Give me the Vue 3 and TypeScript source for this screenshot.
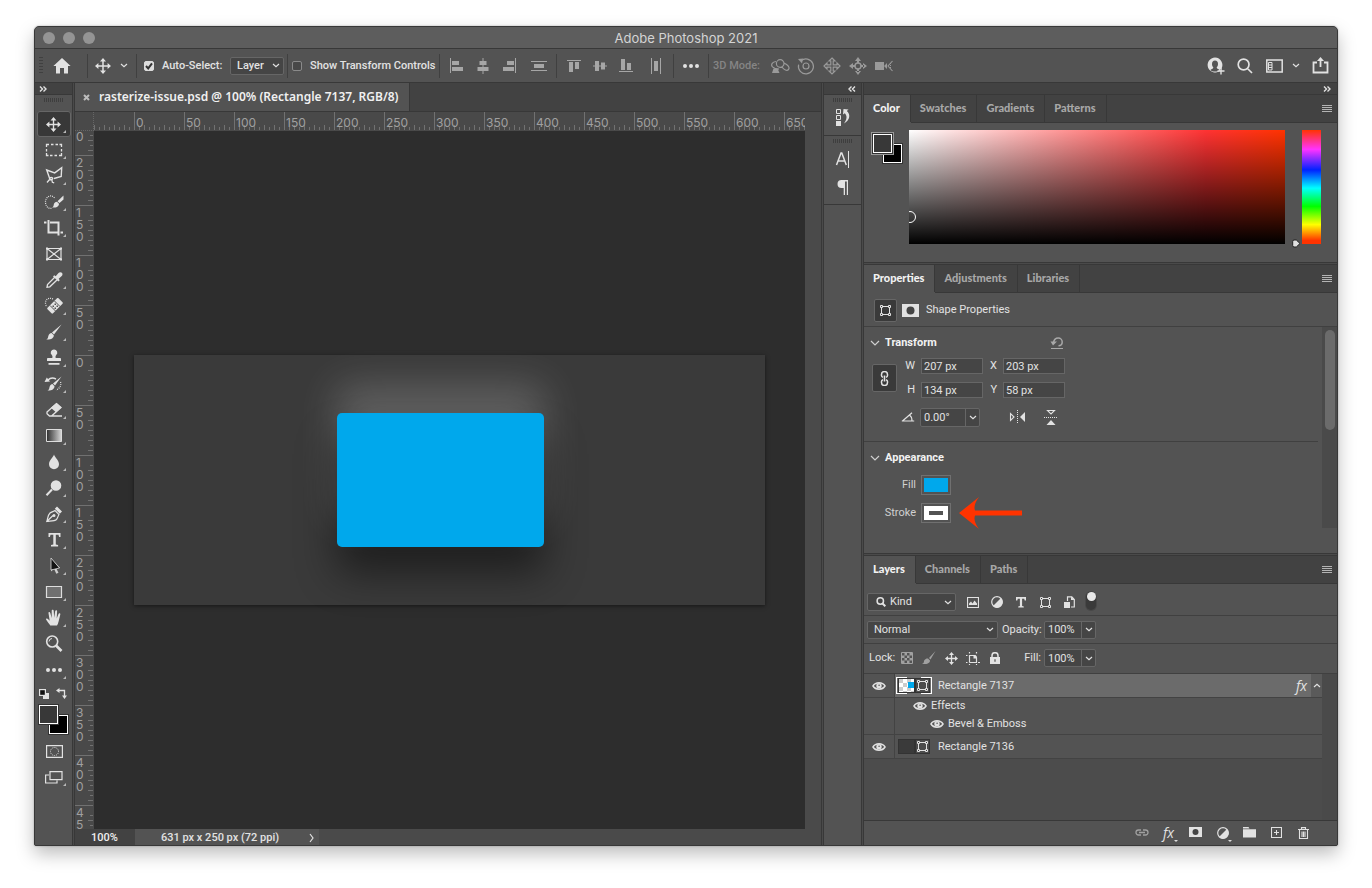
<script setup lang="ts">
import { h, ref } from 'vue'

type Attrs = Record<string, string | number>
type Shape = { d: string; a: Attrs }
type Icon = { w: number; h: number; shapes: Shape[] }

const f = (d: string, extra: Attrs = {}): Shape => ({ d, a: { fill: 'currentColor', ...extra } })
const s = (d: string, width = 1, extra: Attrs = {}): Shape => ({
  d,
  a: { fill: 'none', stroke: 'currentColor', 'stroke-width': width, ...extra },
})
const icon = (w: number, hgt: number, ...shapes: Shape[]): Icon => ({ w, h: hgt, shapes })
const dots = { 'stroke-dasharray': '1 1' }

const icons: Record<string, Icon> = {
  home: icon(18, 16, f('M9 0l8.6 8H15v7.5h-4V10H7v5.5H3V8H.4z')),
  move: icon(16, 16, f('M8 0l3 3.4H5zM8 16l3-3.4H5zM0 8l3.4-3v6zM16 8l-3.4-3v6z'), s('M8 2v12M2 8h12', 1.5)),
  moveSmall: icon(13, 13, f('M6.5 0L9 3H4zM6.5 13L9 10H4zM0 6.5L3 4v5zM13 6.5L10 4v5z'), s('M6.5 2v9M2 6.5h9', 1.3)),
  chevron: icon(8, 5, s('M1 1l3 2.6L7 1', 1.2)),
  chevronUp: icon(8, 5, s('M1 4l3-2.6L7 4', 1.2)),
  chevronRight: icon(6, 10, s('M1 1l3 4-3 4', 1.2)),
  caret: icon(10, 6, s('M1 1l4 4 4-4', 1.2)),
  check: icon(8, 8, s('M1 4l2.2 2.4L7 1.4', 2)),
  alignLeft: icon(16, 16, s('M1.5 0v15'), f('M3 3h7v4H3zM3 9h11v4H3z')),
  alignCenter: icon(16, 16, s('M8 0v16'), f('M4.5 3h7v4h-7zM2.5 9h11v4h-11z')),
  alignRight: icon(16, 16, s('M14.5 0v15'), f('M6 3h7v4H6zM2 9h11v4H2z')),
  spreadV: icon(16, 16, s('M0 3.5h16M0 12.5h16'), f('M3 6h10v4H3z')),
  alignTop: icon(16, 16, s('M1 2.5h14'), f('M3 4h4v10H3zM9 4h4v7H9z')),
  alignMiddle: icon(16, 16, s('M1 8h14'), f('M3 3h4v10H3zM9 4.5h4v7H9z')),
  alignBottom: icon(16, 16, s('M1 13.5h14'), f('M3 1h4v11H3zM9 5h4v7H9z')),
  spreadH: icon(16, 16, s('M3.5 0v16M12.5 0v16'), f('M6 3h4v10H6z')),
  dotsIcon: icon(16, 4, f('M0 2a2 2 0 104 0 2 2 0 10-4 0zM6 2a2 2 0 104 0 2 2 0 10-4 0zM12 2a2 2 0 104 0 2 2 0 10-4 0z')),
  orbit: icon(20, 16, s('M14 5.5a3.8 3.8 0 10-7.6 0 3.8 3.8 0 007.6 0M6 3.5C2.5 3.8.5 6.500 2.5 8.8c1.5 1.600 4 2.200 6.500 2.400M14 5c4 1.800 6 4.500 4.500 6.500-1.500 1.800-4.500.5-6.500-2.500', 1.2), f('M3.5 10.500h4l2 4.500H2z')),
  roll: icon(18, 18, s('M12 9a3 3 0 10-6 0 3 3 0 006 0M4 3.7a7.5 7.5 0 11-2.4 4', 1.2), f('M1 2l5-.5-1 5z')),
  pan: icon(18, 18, s('M9 1l3 3h-1.8v3.8H14V6l3 3-3 3v-1.8h-3.8V14H12l-3 3-3-3h1.8v-3.8H4V12L1 9l3-3v1.8h3.8V4H6z', 1.2)),
  slide: icon(18, 18, s('M12 9a3 3 0 10-6 0 3 3 0 006 0', 1.4), f('M9 0l3 4H6zM9 18l3-4H6zM0 9l4-3v6zM18 9l-4-3v6zM8 3h2v3H8zM8 12h2v3H8zM3 8h3v2H3zM12 8h3v2h-3z')),
  camera: icon(18, 12, f('M0 2h9v8H0zM9 6l3-3v6z'), s('M17.5 1L13 6l4.5 5', 1.1), s('M15.5 3v6', 1, dots)),
  user: icon(18, 18, f('M8 .5a7.5 7.5 0 105 13.2V12h1.2A7.5 7.5 0 008 .5z'), f('M8 3.5c-2 0-3 1.5-3 3.5 0 1.500.5 2.700 1.400 3.500-.4 1.500-1.900 1.400-2.900 2.500C5 15 11 15 12.500 13c-1-1.100-2.500-1-2.900-2.500C10.500 9.700 11 8.500 11 7c0-2-1-3.500-3-3.500z', { fill: '#535353' }), s('M14 10.5v7M10.5 14h7', 1.4)),
  search: icon(16, 16, s('M12 6.5a5.4 5.4 0 10-10.8 0 5.4 5.4 0 0010.8 0M10.5 10.5L15 15', 1.7)),
  lens: icon(10, 10, s('M7.5 4a3.2 3.2 0 10-6.4 0 3.2 3.2 0 006.4 0', 1.5), s('M6.5 6.5L9.3 9.3', 2)),
  workspace: icon(17, 14, s('M.8 1h15.4v12H.8z', 1.5), s('M2.5 3.5H6V11H2.5zM2.5 6H6M2.5 8.5H6', 1)),
  share: icon(17, 17, s('M5 5.5H1.5v10h14v-10H12M8.5 10V2', 1.8), f('M8.5 0l3.5 4H5z')),
  close: icon(7, 7, s('M1 1l5 5M6 1L1 6', 2)),
  dblRight: icon(8, 6, s('M1 .5L3.5 3 1 5.5M4.5 .5L7 3 4.5 5.5', 1.4)),
  dblLeft: icon(8, 6, s('M3.5 .5L1 3l2.5 2.5M7 .5L4.5 3 7 5.5', 1.4)),
  menu: icon(10, 8, s('M0 .5h10M0 2.5h10M0 4.5h10M0 6.5h10')),
  history: icon(16, 18, s('M1.5 1.5h4v4h-4zM1.5 7.5h4v4h-4z'), f('M1 13h5v5H1zM8 6.5L8.500 1l5 .5-1.700 1.500c3.700 3 3.700 9-2.800 12.500 3-4 3.400-7.500.8-10.200z')),
  charA: icon(16, 18, s('M1.5 15L6 3h.8l4.5 12M3 11h7', 1.5), s('M13.5 1v17')),
  paragraph: icon(14, 16, f('M5.500 1h6.500v15h-1.200V2.500H9V16H7.700V9H5.500a4 4 0 010-8z')),
  shape: icon(13, 13, s('M2.5 2.5h8v8h-8z'), s('M1.5 1.5h2v2h-2zM9.5 1.5h2v2h-2zM1.5 9.5h2v2h-2zM9.5 9.5h2v2h-2z', 1, { fill: '#3a3a3a' })),
  mask: icon(17, 13, f('M0 0h17v13H0z'), f('M4.5 6.5a4 4 0 108 0 4 4 0 10-8 0z', { fill: '#454545' })),
  maskSmall: icon(13, 11, f('M0 0h13v10H0z'), f('M3.5 5a3 3 0 106 0 3 3 0 10-6 0z', { fill: '#454545' })),
  reset: icon(14, 13, s('M3.500 5.5C4 3 6 1 8.2 1c2.300 0 4 1.800 4 4 0 2-1.200 3.700-3.700 3.700', 1.5, { stroke: '#a8a8a8' }), f('M.5 4.500h6.500L3 8.500z', { fill: '#a8a8a8' }), s('M1 11.5h12', 1, { stroke: '#a8a8a8' })),
  link: icon(9, 15, s('M3 6.3C2 6 1.5 5.3 1.5 4.5v-1a3 3 0 016 0v1c0 .8-.5 1.5-1.5 1.8M3 8.700c-1 .3-1.5 1-1.5 1.8v1a3 3 0 006 0v-1c0-.8-.5-1.5-1.5-1.8', 1.5), s('M4.5 4.5v6', 1.6)),
  angle: icon(14, 10, s('M.8 9h12.4M1.5 9L11 .8M8.5 3c2 1.4 2.5 3.500 2.5 6', 1.2)),
  flipH: icon(17, 14, s('M1.5 3.5v7L5 7z', 1.1), s('M8.5 0v14', 1, dots), f('M16 2v10l-5-5z')),
  flipV: icon(14, 17, s('M3.5 1.5h7L7 5z', 1.1), s('M0 8.5h14', 1, dots), f('M2.5 16L7 11l4.5 5z')),
  eye: icon(14, 10, s('M1 5C3.5.8 10.5.8 13 5 10.5 9.2 3.5 9.2 1 5z', 1.5), f('M4.300 4.800a2.700 2.700 0 105.400 0 2.700 2.700 0 10-5.400 0z'), f('M6.300 4.300a.8.8 0 101.600 0 .8.8 0 10-1.600 0z', { fill: '#555' })),
  picture: icon(12, 11, s('M.5.5h11v10H.5z', 1.2), f('M2 8V6.5l2-2 1.5 2 2-3L10 6.5V8z')),
  adjust: icon(12, 12, s('M11.3 6A5.3 5.3 0 10.7 6a5.3 5.3 0 0010.6 0', 1.2), f('M10 2L2 10A5.4 5.4 0 0010 2z')),
  typeT: icon(12, 12, f('M1 1h10v3.5H9.7L9.2 2.7H7.1v7.4l1.7.3V11.5H3.2V10.4l1.7-.3V2.7H2.8L2.3 4.5H1z')),
  smart: icon(11, 13, f('M0 6h6v6H0z'), s('M3.5 5V.8h4.3L10.3 3.5V11H7', 1.2), f('M7 .5V4h3.5z')),
  grid: icon(12, 12, s('M.5.5h11v11H.5z'), f('M3.5 1h2.500v2.500H3.500zM8.500 1H11v2.500H8.500zM1 3.500h2.500V6H1zM6 3.500h2.500V6H6zM3.500 6H6v2.500H3.500zM8.500 6H11v2.500H8.500zM1 8.500h2.500V11H1zM6 8.500h2.500V11H6z')),
  brushSmall: icon(14, 14, f('M13.5 0L7 7l1.5 1.5zM6 7.5l2 2c0 3-4 4-8 3.5 2.5-1 1.5-2.5 2.5-4C3.4 7.7 4.8 7.2 6 7.5z')),
  artboard: icon(14, 13, s('M3.5 0v1.5M3.5 3v7.5M0 3.5h1.5M3.5 3.5H8L10.5 6v4.5h-7M12 10.5h2M0 10.5h1.5M3.5 12v1M10.5 12v1M10.5 0v1.5', 1.2), f('M7.5 3h2L11 4.5v2H7.5z')),
  lock: icon(10, 12, f('M0 5h10v7H0z'), s('M2 5.5V3.7a3 3 0 016 0V5.5', 1.5), f('M4.4 7.2h1.2v2.5H4.4z', { fill: '#535353' })),
  chain: icon(14, 7, s('M6 1H3.5a2.5 2.5 0 000 5H6M8 1h2.5a2.5 2.5 0 010 5H8M4 3.5h6', 1.3)),
  folder: icon(13, 11, f('M0 0h5.5l1 1.5H0zM0 2.3h13V10.5H0z')),
  plus: icon(11, 11, s('M.5.5h10v10H.5zM5.5 3v5M3 5.5h5', 1.1)),
  trash: icon(11, 12, s('M0 2.5h11M3.5 2V.6h4V2M1.5 3v8.5h8V3M4 4.5v5.5M5.5 4.5v5.5M7 4.5v5.5', 1.1)),
  defaults: icon(10, 10, f('M4 4h6v6H4z'), f('M0 0h7v7H0z'), f('M1.2 1.2h4.600v4.600H1.200z', { fill: '#111' })),
  swap: icon(11, 11, s('M3 2.5h5.5V8', 1.3), f('M0 2.5L3.5 0v5zM8.5 11L6 7.5h5z')),
  quickMask: icon(17, 13, s('M.6.6h15.8v11.8H.6z', 1.2), s('M12.5 6.5a4 4 0 10-8 0 4 4 0 008 0', 1, dots)),
  screens: icon(18, 13, s('M5 .6h12v8H5zM4 4H.6v8H12V9.5', 1.2)),
  huePointer: icon(9, 9, f('M1.5 1h2.8L8 4.5 4.3 8H1.5L.7 6.500v-4z', { fill: '#e0e0e0', stroke: '#222' })),

  tMove: icon(24, 24, f('M11.5 5l3 3.4h-6zM11.5 20l3-3.4h-6zM4 12.5l3.4-3v6zM19 12.5l-3.4-3v6z'), s('M11.5 7v11M6 12.5h11', 1.4)),
  tMarquee: icon(24, 24, s('M4.5 9V6.5H7M9 6.5h2.5M13.5 6.5H16M17.5 6.5h2V9M19.5 11v2.5M19.5 15v2.5H17M15 17.5h-2.5M10.5 17.5H8M6.5 17.5h-2V15M4.5 13.5V11', 1.3)),
  tLasso: icon(24, 24, s('M7.5 14L4.7 6l8 2.9 7-5.2-.5 8.8L12 14.5', 1.4), s('M10.8 14.6c0-1.5-3.3-1.5-3.3 0s3.3 1.5 3.3 0M7.8 15.3L5 18.5M9.800 15.500l.6 2.800 1.800.5', 1.3)),
  tQuick: icon(24, 24, s('M12.5 8C9 3.5 3 7 3.5 12.5S8 19 10 18', 1.2, dots), f('M21.5 5.500v4l-4 3.500-2-1.800zM15 11.700l2 2c0 3.500-4 4.200-7 3.800 2-1.200 1.500-2.300 2-3.800.5-1.300 1.800-2 3-2z')),
  tCrop: icon(24, 24, s('M2 6.5h2.5M6.5 4v12.5H16M8 6.5h8.5v13M18.5 16.5h2.5', 2)),
  tFrame: icon(24, 24, s('M5 6.5h14v11H5zM5 6.5l14 11M19 6.5l-14 11', 1.2), f('M4 5.5h2v2H4zM18 5.5h2v2h-2zM4 16.5h2v2H4zM18 16.5h2v2h-2z')),
  tDropper: icon(24, 24, s('M13 9l-7.5 7.5-.5 2.8 2.8-.5L15.5 11.5', 1.3), f('M11 8.5l1.2-1.2 1.5 1L16.5 5c1-1.2 2.6-1 3.4-.2s.9 2.2-.2 3.2l-3 2.7 1 1.5-1.2 1.2z')),
  tHeal: icon(24, 24, s('M11 5C7 3 3 5.5 3.5 9.5 3.6 11 4.3 12 5 12.5', 1.2, dots), f('M16.5 4.3l4 4c.5.5.5 1 0 1.5l-9.5 9.5c-.5.5-1 .5-1.500 0l-4-4c-.5-.5-.5-1 0-1.500l9.500-9.500c.5-.5 1-.5 1.500 0z'), s('M12.5 7l5.5 5.5M8 11.5l5.5 5.5', 1, { stroke: '#535353' }), f('M12.5 9.5H14V11h-1.5zM10.5 11.5H12V13h-1.5zM12.5 13.5H14V15h-1.5zM14.5 11.5H16V13h-1.5z', { fill: '#535353' })),
  tBrush: icon(24, 24, f('M19.5 4.5L12 14.5 10 12.5zM9.5 13l2.3 2.3c.2 3-3.5 4.7-7.5 4.2 2-.7 1.5-2.2 2.2-4C7 14 8.2 13 9.5 13z')),
  tStamp: icon(24, 24, f('M12 3.5a3.2 3.2 0 012.2 5.6c-.8.9-.8 1.8-.5 2.9H18c.6 0 1 .5 1 1v2H5v-2c0-.5.4-1 1-1h4.3c.3-1.1.3-2-.5-2.9A3.2 3.2 0 0112 3.5zM6.5 17h11v1.7h-11z')),
  tHistory: icon(24, 24, f('M19.5 4.5L13 13.5l-2-2zM10.5 12l2 2.2c0 3-3.3 4.7-7 4.3 2-.7 1.5-2.2 2.2-4 .5-1.5 1.6-2.5 2.8-2.5zM2.5 10l2.3-4.5L8 9.5z'), s('M6 8c2-2 5-2.5 8-1', 1.5), s('M18.5 10c1 3-.5 6.5-4.5 8', 1.2, dots)),
  tEraser: icon(24, 24, s('M5 14l9.5-8.5 4.5 4L9.5 18H7.5L5 15.7zM10 18h10', 1.3), f('M14.5 5l5 4.5-5.5 4.7-5.2-4.5z')),
  tGradient: icon(24, 24, f('M4.5 5.5h15v12h-15z', { fill: 'url(#toolGradient)', stroke: '#ddd' })),
  tDrop: icon(24, 24, f('M12 4.5c1 3 5 6 5 9.7a5 5 0 01-10 0C7 10.5 11 7.5 12 4.5z')),
  tDodge: icon(24, 24, f('M19.3 9.5a5.3 5.3 0 10-10.6 0 5.3 5.3 0 0010.6 0z'), s('M10 13.5l-5.5 5.8', 2)),
  tPen: icon(24, 24, s('M4.8 19.5c1-3 1-6.5 3.2-8.5 1.5-1.2 3.5-1.5 5-2.5l4 4c-1 1.5-1.2 3.5-2.5 5-2 1.7-6 1.5-9.7 2zM5 19.3l6-5.8', 1.2), f('M10.5 13.5a1.5 1.5 0 103 0 1.5 1.5 0 10-3 0zM15 4.5l5 5-2.2 2.3-5-5z')),
  tType: icon(24, 24, f('M6.5 5h12v4h-1.4l-.6-2.2h-2.7v9.8l2.3.4V18.5H9V17l2.3-.4V6.8H8.5L7.9 9H6.5z')),
  tSelect: icon(24, 24, f('M9 4.5v13l3-2.8 2.3 5 2.2-1-2.4-4.8h4z', { fill: '#ccc' }), f('M9 4v12l8.5-2z', { fill: '#141414', stroke: '#ddd', 'stroke-width': 0.8 })),
  tRect: icon(24, 24, f('M4.5 6.5h15v11h-15z', { fill: '#707070', stroke: '#ddd', 'stroke-width': 1.2 })),
  tHand: icon(24, 24, f('M8.3 19.5C7 17.5 5.5 16 4.2 13.8c-.7-1.3 1-1.8 2-.6l1.5 1.5L6.5 7.2c-.2-1.4 1.5-1.5 1.8-.2l1.4 5V4.8c0-1.3 1.9-1.3 2 0l.5 7 1-6.7c.3-1.2 2-1 1.9.3l-.4 7.2 1.9-4.8c.5-1.1 2-.6 1.7.6l-1.7 7c-.5 2-1 3-1.6 4.1z')),
  tZoom: icon(24, 24, s('M15.7 9.5a5.5 5.5 0 10-11 0 5.5 5.5 0 0011 0', 1.6), s('M7 9.5A3.2 3.2 0 0110 6.5', 1), s('M14 13.5l5.5 5.5', 2.6)),
  tMore: icon(24, 24, f('M4 12a2 2 0 104 0 2 2 0 10-4 0zM10 12a2 2 0 104 0 2 2 0 10-4 0zM16 12a2 2 0 104 0 2 2 0 10-4 0z')),
}

const Glyph = (props: { name: string }) => {
  const i = icons[props.name]
  return h(
    'svg',
    { class: 'glyph', width: i.w, height: i.h, viewBox: `0 0 ${i.w} ${i.h}`, 'aria-hidden': 'true' },
    i.shapes.map((p) => h('path', { d: p.d, ...p.a })),
  )
}
Glyph.props = ['name']

const tools = [
  ['tMove', 'Move'], ['tMarquee', 'Marquee'], ['tLasso', 'Lasso'], ['tQuick', 'Quick Selection'],
  ['tCrop', 'Crop'], ['tFrame', 'Frame'], ['tDropper', 'Eyedropper'], ['tHeal', 'Healing Brush'],
  ['tBrush', 'Brush'], ['tStamp', 'Clone Stamp'], ['tHistory', 'History Brush'], ['tEraser', 'Eraser'],
  ['tGradient', 'Gradient'], ['tDrop', 'Blur'], ['tDodge', 'Dodge'], ['tPen', 'Pen'],
  ['tType', 'Type'], ['tSelect', 'Path Selection'], ['tRect', 'Rectangle'], ['tHand', 'Hand'],
  ['tZoom', 'Zoom'], ['tMore', 'More Tools'],
]
const noFlyout = ['tFrame', 'tZoom']

const hMajors = Array.from({ length: 14 }, (_, i) => ({ x: i * 50 + 40, label: String(i * 50) }))
const vMajors = Array.from({ length: 15 }, (_, i) => {
  const v = (i - 5) * 50
  const y = 224 + v
  const digits = String(Math.abs(v))
    .split('')
    .map((d, k) => ({ d, y: y + 12 + k * 12 }))
    .filter((t) => t.y > 6 && t.y < 704)
  return { y, digits }
})

const autoSelect = ref(true)
const showTransform = ref(false)
const width = ref('207 px')
const height = ref('134 px')
const posX = ref('203 px')
const posY = ref('58 px')
const rotation = ref('0.00°')
const opacity = ref('100%')
const fillOpacity = ref('100%')
</script>

<template>
  <main class="desktop">
    <div class="window">
      <header class="titlebar">
        <div class="lights"><i></i><i></i><i></i></div>
        <h1>Adobe Photoshop 2021</h1>
      </header>

      <div class="options">
        <div class="group g-home">
          <span class="grip-v"></span>
          <button aria-label="Home"><Glyph name="home" /></button>
        </div>
        <div class="group g-move">
          <button aria-label="Move tool"><Glyph name="move" /></button>
          <button aria-label="Tool presets"><Glyph name="chevron" /></button>
        </div>
        <div class="group g-auto">
          <label class="tick">
            <input v-model="autoSelect" type="checkbox" />
            <Glyph v-if="autoSelect" name="check" />
            <span>Auto-Select:</span>
          </label>
          <div class="drop drop-layer">
            <select aria-label="Auto-select target"><option>Layer</option></select>
            <Glyph name="chevron" />
          </div>
        </div>
        <div class="group g-show">
          <label class="tick">
            <input v-model="showTransform" type="checkbox" />
            <Glyph v-if="showTransform" name="check" />
            <span>Show Transform Controls</span>
          </label>
        </div>
        <div class="group g-align dim">
          <button v-for="n in ['alignLeft', 'alignCenter', 'alignRight', 'spreadV']" :key="n" :aria-label="n"><Glyph :name="n" /></button>
        </div>
        <div class="group g-align dim">
          <button v-for="n in ['alignTop', 'alignMiddle', 'alignBottom', 'spreadH']" :key="n" :aria-label="n"><Glyph :name="n" /></button>
        </div>
        <div class="group g-more"><button aria-label="More"><Glyph name="dotsIcon" /></button></div>
        <div class="group g-3d">
          <span class="mode">3D Mode:</span>
          <button v-for="n in ['orbit', 'roll', 'pan', 'slide', 'camera']" :key="n" :aria-label="n"><Glyph :name="n" /></button>
        </div>
        <div class="right">
          <button aria-label="Account"><Glyph name="user" /></button>
          <button class="find" aria-label="Search"><Glyph name="search" /></button>
          <button class="ws" aria-label="Workspace"><Glyph name="workspace" /></button>
          <button aria-label="Workspace list"><Glyph name="chevron" /></button>
          <button aria-label="Share"><Glyph name="share" /></button>
        </div>
      </div>

      <div class="workspace">
        <aside class="toolbox">
          <div class="dock-head start"><Glyph name="dblRight" /></div>
          <div class="grip"></div>
          <svg class="defs" width="0" height="0" aria-hidden="true">
            <linearGradient id="toolGradient"><stop offset="0" stop-color="#2c2c2c" /><stop offset="1" stop-color="#d8d8d8" /></linearGradient>
          </svg>
          <button v-for="(t, i) in tools" :key="t[0]" class="tool" :class="{ active: i === 0, flyout: !noFlyout.includes(t[0]) }" :aria-label="t[1]">
            <Glyph :name="t[0]" />
          </button>
          <div class="mini">
            <button aria-label="Default colors"><Glyph name="defaults" /></button>
            <button aria-label="Swap colors"><Glyph name="swap" /></button>
          </div>
          <div class="swatches tool-swatches">
            <button class="bg" aria-label="Background color"></button>
            <button class="fg" aria-label="Foreground color"></button>
          </div>
          <button class="tool" aria-label="Quick mask"><Glyph name="quickMask" /></button>
          <button class="tool flyout" aria-label="Screen mode"><Glyph name="screens" /></button>
        </aside>

        <section class="document">
          <div class="doc-tabs">
            <div class="doc-tab">
              <button aria-label="Close"><Glyph name="close" /></button>
              <span>rasterize-issue.psd @ 100% (Rectangle 7137, RGB/8)</span>
            </div>
          </div>
          <div class="view">
            <div class="corner"></div>
            <div class="ruler-h">
              <svg width="760" height="19" aria-hidden="true">
                <g class="ticks">
                  <template v-for="n in 151" :key="n">
                    <path v-if="(n - 1) % 10" :d="(n - 1) % 2 ? `M${n * 5 - 14.5} 15v3` : `M${n * 5 - 14.5} 13v5`" />
                  </template>
                  <path v-for="m in hMajors" :key="m.x" :d="`M${m.x + 0.5} 0v18`" />
                </g>
                <text v-for="m in hMajors" :key="m.x" :x="m.x + 2" y="15">{{ m.label }}</text>
              </svg>
            </div>
            <div class="vbar"></div>
            <div class="ruler-v">
              <svg width="19" height="760" aria-hidden="true">
                <g class="ticks">
                  <template v-for="n in 151" :key="n">
                    <path v-if="(n + 4) % 10" :d="(n % 2) ? `M15 ${n * 5 - 0.5}h3` : `M13 ${n * 5 - 0.5}h5`" />
                  </template>
                  <path v-for="m in vMajors" :key="m.y" :d="`M0 ${m.y + 0.5}h18`" />
                </g>
                <text v-for="m in vMajors" :key="m.y"><tspan v-for="t in m.digits" :key="t.y" x="1" :y="t.y">{{ t.d }}</tspan></text>
              </svg>
            </div>
            <div class="canvas">
              <div class="artboard"><div class="rect"></div></div>
            </div>
            <div class="vbar"></div>
          </div>
          <footer class="status">
            <span class="zoom">100%</span>
            <div class="info"><span>631 px x 250 px (72 ppi)</span><button aria-label="Status menu"><Glyph name="chevronRight" /></button></div>
          </footer>
        </section>

        <aside class="strip">
          <div class="dock-head end"><Glyph name="dblLeft" /></div>
          <div class="strip-block one"><div class="grip"></div><button aria-label="History"><Glyph name="history" /></button></div>
          <div class="strip-block two">
            <div class="grip"></div>
            <button aria-label="Character"><Glyph name="charA" /></button>
            <button aria-label="Paragraph"><Glyph name="paragraph" /></button>
          </div>
        </aside>

        <aside class="panels">
          <div class="dock-head end last"><Glyph name="dblRight" /></div>

          <section class="panel color">
            <nav class="tabs">
              <button class="on">Color</button><button>Swatches</button><button>Gradients</button><button>Patterns</button>
              <button class="menu" aria-label="Panel menu"><Glyph name="menu" /></button>
            </nav>
            <div class="color-body">
              <div class="swatches">
                <button class="bg" aria-label="Background color"></button>
                <button class="fg" aria-label="Foreground color"></button>
              </div>
              <div class="field"><span class="ring"></span></div>
              <div class="hue"><span class="pointer"><Glyph name="huePointer" /></span></div>
            </div>
          </section>

          <section class="panel properties">
            <nav class="tabs">
              <button class="on">Properties</button><button>Adjustments</button><button>Libraries</button>
              <button class="menu" aria-label="Panel menu"><Glyph name="menu" /></button>
            </nav>
            <div class="kind-row">
              <button class="boxed" aria-label="Shape"><Glyph name="shape" /></button>
              <button aria-label="Mask"><Glyph name="mask" /></button>
              <span>Shape Properties</span>
            </div>
            <div class="scroller">
              <div class="scroll-content">
                <div class="transform">
                  <h2><Glyph name="caret" /><span>Transform</span><button aria-label="Reset"><Glyph name="reset" /></button></h2>
                  <div class="fields">
                    <button class="link" aria-label="Link size"><Glyph name="link" /></button>
                    <label for="fw">W</label><input id="fw" v-model="width" />
                    <label for="fx">X</label><input id="fx" v-model="posX" />
                    <label for="fh">H</label><input id="fh" v-model="height" />
                    <label for="fy">Y</label><input id="fy" v-model="posY" />
                  </div>
                  <div class="angle-row">
                    <label for="fa" aria-label="Rotation"><Glyph name="angle" /></label>
                    <div class="combo"><input id="fa" v-model="rotation" /><button aria-label="Angles"><Glyph name="chevron" /></button></div>
                    <button class="flip" aria-label="Flip horizontal"><Glyph name="flipH" /></button>
                    <button class="flip" aria-label="Flip vertical"><Glyph name="flipV" /></button>
                  </div>
                </div>
                <div class="appearance">
                  <h2><Glyph name="caret" /><span>Appearance</span></h2>
                  <div class="paint"><span>Fill</span><button class="chip" aria-label="Fill color"><i class="blue"></i></button></div>
                  <div class="paint">
                    <span>Stroke</span><button class="chip" aria-label="Stroke color"><i class="none"></i></button>
                    <svg class="arrow" width="64" height="32" viewBox="0 0 64 32" aria-hidden="true">
                      <path d="M0 16 20 0Q14 8 16 13.5H63V18.5H16Q14 24 20 32Z" fill="#ff3300" />
                    </svg>
                  </div>
                </div>
              </div>
              <div class="track"><span class="thumb"></span></div>
            </div>
          </section>

          <section class="panel layers">
            <nav class="tabs">
              <button class="on">Layers</button><button>Channels</button><button>Paths</button>
              <button class="menu" aria-label="Panel menu"><Glyph name="menu" /></button>
            </nav>
            <div class="row filter">
              <div class="drop drop-kind">
                <span class="lens"><Glyph name="lens" /></span>
                <select aria-label="Filter kind"><option>Kind</option></select>
                <Glyph name="chevron" />
              </div>
              <button v-for="n in ['picture', 'adjust', 'typeT', 'shape', 'smart']" :key="n" class="filter-icon" :aria-label="n"><Glyph :name="n" /></button>
              <button class="toggle" aria-label="Filter on or off"><i></i></button>
            </div>
            <div class="row blend">
              <div class="drop drop-blend">
                <select aria-label="Blend mode"><option>Normal</option></select>
                <Glyph name="chevron" />
              </div>
              <label for="op">Opacity:</label>
              <div class="combo pct"><input id="op" v-model="opacity" /><button aria-label="Opacity slider"><Glyph name="chevron" /></button></div>
            </div>
            <div class="row locks">
              <span class="lock-label">Lock:</span>
              <button class="faded" aria-label="Lock transparency"><Glyph name="grid" /></button>
              <button class="faded" aria-label="Lock pixels"><Glyph name="brushSmall" /></button>
              <button aria-label="Lock position"><Glyph name="moveSmall" /></button>
              <button aria-label="Lock artboard"><Glyph name="artboard" /></button>
              <button aria-label="Lock all"><Glyph name="lock" /></button>
              <label for="fl">Fill:</label>
              <div class="combo pct"><input id="fl" v-model="fillOpacity" /><button aria-label="Fill slider"><Glyph name="chevron" /></button></div>
            </div>
            <div class="list">
              <ul>
                <li class="layer selected">
                  <button class="eye" aria-label="Visibility"><Glyph name="eye" /></button>
                  <div class="name">
                    <span class="thumbs framed"><i class="checker"></i><i class="vec"><Glyph name="shape" /></i></span>
                    <span>Rectangle 7137</span><em class="fx">fx</em>
                  </div>
                  <button class="fold" aria-label="Collapse effects"><Glyph name="chevronUp" /></button>
                </li>
                <li class="effects">
                  <span class="eye"></span>
                  <div>
                    <p><Glyph name="eye" /><span>Effects</span></p>
                    <p class="deep"><Glyph name="eye" /><span>Bevel &amp; Emboss</span></p>
                  </div>
                </li>
                <li class="layer">
                  <button class="eye" aria-label="Visibility"><Glyph name="eye" /></button>
                  <div class="name">
                    <span class="thumbs"><i class="solid"></i><i class="vec"><Glyph name="shape" /></i></span>
                    <span>Rectangle 7136</span>
                  </div>
                </li>
              </ul>
              <div class="track"></div>
            </div>
            <footer class="layer-actions">
              <button class="faded" aria-label="Link layers"><Glyph name="chain" /></button>
              <button class="pick" aria-label="Layer style"><em class="fx">fx</em></button>
              <button aria-label="Add mask"><Glyph name="maskSmall" /></button>
              <button class="pick" aria-label="Adjustment layer"><Glyph name="adjust" /></button>
              <button aria-label="New group"><Glyph name="folder" /></button>
              <button aria-label="New layer"><Glyph name="plus" /></button>
              <button aria-label="Delete"><Glyph name="trash" /></button>
            </footer>
          </section>
        </aside>
      </div>
    </div>
  </main>
</template>

<style>
body { background: #fff; }
svg.glyph { display: block; flex: none; }
</style>

<style scoped>
* { box-sizing: border-box; }
.desktop {
  min-height: 100vh;
  padding: 26px 34px 42px;
  display: flex;
  color: #e2e2e2;
  font-family: Roboto, "Liberation Sans", sans-serif;
  font-size: 11px;
  line-height: 14px;
}
button, input, select { font: inherit; color: inherit; margin: 0; padding: 0; border: 0; background: none; border-radius: 0; outline: none; }
button { display: flex; align-items: center; justify-content: center; flex: none; }
h1, h2, p, ul { margin: 0; padding: 0; list-style: none; }
.window {
  flex: 1;
  min-width: 0;
  display: flex;
  flex-direction: column;
  border: 1px solid #383838;
  border-radius: 5px 5px 2px 2px;
  background: #4a4a4a;
  overflow: hidden;
  box-shadow: 0 0 2px rgba(0, 0, 0, 0.3), 0 8px 18px rgba(0, 0, 0, 0.26);
}
.titlebar { height: 22px; display: grid; grid-template-columns: 1fr auto 1fr; align-items: center; background: #5d5d5d; border-bottom: 1px solid #383838; }
.titlebar h1 { font-family: Inter, sans-serif; font-size: 13px; font-weight: 400; color: #d4d4d4; line-height: 16px; }
.lights { display: flex; gap: 8px; padding-left: 8px; }
.lights i { width: 12px; height: 12px; border-radius: 50%; background: #949494; }

.options { height: 34px; display: flex; align-items: center; background: #535353; border-bottom: 1px solid #383838; font-weight: 500; }
.group { height: 24px; flex: none; display: flex; align-items: center; border-left: 1px solid #404040; }
.g-home { width: 52px; border: 0; gap: 10px; padding-left: 4px; }
.grip-v { width: 4px; height: 18px; background: repeating-linear-gradient(#404040 0 1px, transparent 1px 3px); }
.g-move { width: 49px; padding-left: 7px; gap: 9px; }
.g-auto { width: 151px; padding: 0 3px 0 7px; justify-content: space-between; }
.g-show { width: 152px; padding-left: 4px; }
.g-align { width: 117px; padding-left: 9px; gap: 10px; }
.g-align button:last-child { margin-left: 4px; }
.g-more { width: 35px; justify-content: center; }
.g-3d { padding-left: 4px; color: #9a9a9a; }
.g-3d button { width: 26px; }
.mode { width: 54px; color: #858585; white-space: nowrap; }
.dim { color: #a6a6a6; }
.right { margin-left: auto; padding-right: 8px; display: flex; align-items: center; gap: 12px; }
.find { margin-right: 1px; }
.ws { margin-right: -3px; }
.tick { display: grid; grid-template-columns: 11px auto; align-items: center; column-gap: 7px; white-space: nowrap; }
.tick input { appearance: none; grid-area: 1 / 1; width: 10px; height: 10px; border: 1px solid #8a8a8a; border-radius: 2px; background: #484848; }
.tick input:checked { background: #dcdcdc; border-color: #dcdcdc; }
.tick .glyph { grid-area: 1 / 1; margin-left: 1px; color: #333; }
.tick span { grid-area: 1 / 2; }
.drop { position: relative; display: flex; align-items: center; height: 18px; border: 1px solid #666; border-radius: 2px; background: #454545; }
.drop select { appearance: none; flex: 1; min-width: 0; height: 16px; padding-left: 6px; }
.drop > .glyph { margin-right: 3px; pointer-events: none; }
.drop-layer { width: 54px; }

.workspace { flex: 1; min-height: 0; display: flex; gap: 1px; }
.dock-head { height: 12px; display: flex; align-items: center; background: #424242; border-bottom: 1px solid #383838; }
.dock-head.start { padding-left: 4px; }
.dock-head.end { justify-content: flex-end; padding-right: 5px; }
.dock-head.last { padding-right: 6px; }
.grip { width: 19px; height: 4px; margin: 3px auto 0; background: repeating-linear-gradient(90deg, #3e3e3e 0 1px, transparent 1px 2px); }
.toolbox { width: 38px; flex: none; display: flex; flex-direction: column; background: #535353; border-right: 1px solid #383838; }
.toolbox .grip { margin: 3px 0 9px 9px; }
.defs { position: absolute; }
.tool { position: relative; width: 34px; height: 26px; margin-left: 2px; border-radius: 3px; }
.tool.active { background: #383838; box-shadow: inset 0 0 0 1px #666; }
.tool.flyout::after { content: ""; position: absolute; right: 5px; bottom: 4px; border-style: solid; border-width: 0 0 3px 3px; border-color: transparent transparent #b8b8b8; }
.mini { display: flex; gap: 7px; align-items: center; padding: 5px 0 3px 4px; }
.swatches { position: relative; width: 29px; height: 29px; flex: none; }
.swatches button { position: absolute; width: 19px; height: 19px; border: 1px solid #fff; box-shadow: 0 0 0 1px #333; background: #383838; }
.swatches .fg { left: 0; top: 0; }
.swatches .bg { right: 0; bottom: 0; background: #000; }
.tool-swatches { margin: 3px 0 4px 4px; }

.document { flex: 1; min-width: 0; display: flex; flex-direction: column; border: solid #383838; border-width: 0 1px; }
.doc-tabs { height: 29px; flex: none; display: flex; background: #424242; border-bottom: 1px solid #383838; }
.doc-tab { display: flex; align-items: center; gap: 9px; padding: 0 10px 0 8px; background: #535353; border-right: 1px solid #383838; color: #f0f0f0; font-family: "Noto Sans", sans-serif; font-size: 12px; font-weight: 600; white-space: nowrap; }
.doc-tab button { color: #bdbdbd; }
.view { flex: 1; min-height: 0; display: grid; grid-template: 19px minmax(0, 1fr) / 19px minmax(0, 1fr) 16px; }
.corner, .ruler-h, .ruler-v { background: #494949; overflow: hidden; }
.corner { border: dotted #666; border-width: 0 1px 1px 0; }
.ruler-h, .ruler-v { position: relative; min-width: 0; min-height: 0; }
.ruler-h svg, .ruler-v svg { position: absolute; left: 0; top: 0; font-family: Inter, sans-serif; font-size: 12px; }
.ruler-h text, .ruler-v text { fill: #a0a0a0; }
.ticks { stroke: #717171; stroke-width: 1; }
.vbar { background: #4a4a4a; }
.canvas { position: relative; overflow: hidden; background: #2d2d2d; }
.artboard { position: absolute; left: 40px; top: 224px; width: 631px; height: 250px; background: #3a3a3a; box-shadow: 0 1px 4px rgba(0, 0, 0, 0.5); }
.rect { position: absolute; left: 203px; top: 58px; width: 207px; height: 134px; border-radius: 5px; background: #00a8ec; box-shadow: 0 26px 40px rgba(0, 0, 0, 0.48), 0 -28px 40px rgba(255, 255, 255, 0.2); }
.status { height: 16px; flex: none; display: flex; background: #4a4a4a; font-weight: 500; }
.zoom { width: 60px; padding: 2px 0 0 16px; background: #424242; color: #f0f0f0; }
.info { width: 184px; padding: 2px 4px 0 26px; display: flex; justify-content: space-between; background: #535353; }

.strip { width: 39px; flex: none; background: #535353; border: solid #383838; border-width: 0 1px; }
.strip-block { border-bottom: 1px solid #383838; }
.strip-block.one { height: 41px; padding-top: 1px; }
.strip-block.two { height: 69px; padding-top: 1px; }
.strip-block button { margin: 6px auto 0; }
.strip-block.two button { height: 24px; margin-top: 4px; }
.strip-block .grip { margin-top: 2px; }

.panels { width: 474px; flex: none; display: flex; flex-direction: column; border-left: 1px solid #383838; }
.panel { display: flex; flex-direction: column; background: #535353; border-bottom: 1px solid #383838; }
.tabs { height: 28px; flex: none; display: flex; background: #424242; border-bottom: 1px solid #383838; font-family: Lato, sans-serif; font-weight: 900; color: #a8a8a8; }
.tabs button { height: 27px; padding: 0 10px 2px 9px; border-right: 1px solid #383838; }
.tabs .on { background: #535353; color: #f2f2f2; box-shadow: 0 1px #535353; }
.tabs .menu { margin-left: auto; padding: 0 5px; border: 0; color: #b4b4b4; }
.color { height: 168px; flex: none; }
.color-body { display: flex; padding: 7px 16px 0 9px; }
.color .swatches { margin: 4px 7px 0 0; }
.color .swatches .fg { box-shadow: 0 0 0 1px #333, 0 0 0 2px #999; }
.field { position: relative; flex: 1; height: 114px; overflow: hidden; background: linear-gradient(rgba(0, 0, 0, 0), #000), linear-gradient(90deg, #fff, #ff3333 79%, #ff3300); }
.ring { position: absolute; left: -5px; top: 81px; width: 12px; height: 12px; border: 1px solid #fff; border-radius: 50%; }
.hue { position: relative; width: 19px; height: 114px; margin-left: 17px; background: linear-gradient(#ff3300, #ff33ff 17%, #0022ff 35%, #00ffff 51%, #00ff00 67%, #ffff00 83%, #ff3300 97%); }
.pointer { position: absolute; left: -10px; bottom: -4px; }

.properties { height: 290px; flex: none; margin-top: 1px; border-top: 1px solid #383838; }
.kind-row { height: 34px; flex: none; display: flex; align-items: center; gap: 5px; padding: 1px 0 0 10px; border-bottom: 1px solid #404040; }
.kind-row span { margin-left: 2px; }
.boxed { width: 23px; height: 23px; border: 1px solid #666; border-radius: 2px; background: #3a3a3a; }
.scroller { height: 201px; display: flex; }
.scroll-content { flex: 1; padding-right: 4px; }
.track { width: 15px; flex: none; padding: 3px 2px 0 3px; background: #4a4a4a; }
.thumb { display: block; height: 100px; border-radius: 5px; background: #6b6b6b; }
.scroller h2 { display: flex; align-items: center; gap: 5px; font-size: 11px; line-height: 14px; font-weight: 700; color: #f2f2f2; }
.scroller h2 .glyph { color: #d0d0d0; }
.scroller h2 span { width: 72px; }
.scroller h2 button { margin-left: 88px; }
.transform { height: 115px; padding: 9px 0 0 6px; border-bottom: 1px solid #404040; }
.fields { display: grid; grid-template: 16px 16px / 27px 22px 62px 20px 62px; row-gap: 8px; padding: 8px 0 0 2px; }
.fields label { align-self: center; justify-self: end; padding-right: 6px; }
.link { grid-row: 1 / 3; width: 25px; height: 28px; align-self: center; border: 1px solid #666; border-radius: 2px; background: #3a3a3a; }
.fields input { min-width: 0; height: 16px; padding-left: 2px; border: 1px solid #666; background: #454545; }
.angle-row { display: flex; align-items: center; height: 18px; margin-top: 10px; padding-left: 31px; }
.combo { display: flex; width: 60px; height: 19px; border: 1px solid #666; border-radius: 2px; background: #454545; }
.combo input { flex: 1; min-width: 0; padding: 1px 0 0 3px; }
.combo button { width: 14px; border-left: 1px solid #666; }
.angle-row .combo { margin-left: 5px; }
.flip { margin-left: 29px; }
.flip + .flip { margin-left: 18px; }
.appearance { padding: 9px 0 0 6px; }
.paint { display: flex; align-items: center; height: 20px; margin-top: 10px; }
.paint + .paint { margin-top: 8px; }
.paint span { width: 46px; margin-right: 5px; text-align: right; color: #d0d0d0; }
.chip { width: 30px; height: 20px; border: 1px solid #707070; }
.chip i { width: 24px; height: 14px; background: #00a8ec; }
.chip .none { background: linear-gradient(#535353, #535353) center / 14px 4px no-repeat #fff; }
.arrow { margin-left: 8px; }

.layers { flex: 1; min-height: 0; margin-top: 1px; border-top: 1px solid #383838; border-bottom: 0; }
.row { flex: none; display: flex; align-items: center; padding-left: 3px; border-bottom: 1px solid #404040; }
.filter { height: 32px; padding-top: 5px; }
.drop-kind { width: 89px; margin-right: 5px; }
.lens { margin-left: 8px; }
.drop-kind select { padding-left: 4px; }
.filter-icon { width: 24px; }
.toggle { width: 10px; height: 18px; margin: -3px 0 0 5px; border-radius: 5px; background: #3a3a3a; box-shadow: 0 0 0 1px #484848; align-items: flex-start; }
.toggle i { width: 9px; height: 9px; border-radius: 50%; background: #e8e8e8; }
.blend { height: 28px; }
.drop-blend { width: 131px; }
.blend label { width: 46px; padding-left: 4px; }
.combo.pct { width: 52px; height: 18px; }
.row.locks { height: 30px; padding-bottom: 1px; }
.lock-label { width: 29px; padding-left: 2px; }
.locks button { width: 22px; }
.locks .combo button { width: 14px; }
.locks label { width: 38px; text-align: right; padding-right: 3px; }
.faded { color: #a0a0a0; }
.list { flex: 1; min-height: 0; display: flex; background: #4c4c4c; }
.list ul { flex: 1; }
.list li { display: flex; background: #535353; border-bottom: 1px solid #434343; }
.layer { height: 24px; align-items: stretch; }
.eye { width: 31px; border-right: 1px solid #434343; }
.name { flex: 1; display: flex; align-items: center; padding: 0 4px 0 1px; }
.selected .name { background: #6b6b6b; }
.thumbs { display: flex; width: 36px; height: 17px; margin-right: 6px; padding: 1px 1px 1px 2px; align-items: center; }
.framed { background: conic-gradient(#fff 0 0) 0 0 / 11px 1px no-repeat, conic-gradient(#fff 0 0) 100% 0 / 11px 1px no-repeat, conic-gradient(#fff 0 0) 0 100% / 11px 1px no-repeat, conic-gradient(#fff 0 0) 100% 100% / 11px 1px no-repeat, conic-gradient(#fff 0 0) 0 0 / 1px 17px no-repeat, conic-gradient(#fff 0 0) 100% 0 / 1px 17px no-repeat; }
.thumbs i { width: 17px; height: 15px; border: 1px solid #333; display: flex; align-items: center; justify-content: center; }
.thumbs .checker { background: linear-gradient(#00a8ec, #00a8ec) 9px 3px / 6px 6px no-repeat, repeating-conic-gradient(#fff 0 25%, #ccc 0 50%) 0 0 / 8px 8px; }
.thumbs .solid { background: #3a3a3a; }
.thumbs .vec { width: 15px; background: #4c4c4c; }
.fx { margin-left: auto; font-family: "Open Sans", sans-serif; font-size: 14px; font-style: italic; line-height: 16px; }
.fold { width: 11px; background: #5a5a5a; }
.effects { height: 37px; }
.effects p { display: flex; align-items: center; gap: 4px; height: 19px; padding-left: 18px; }
.effects p:first-child { height: 15px; }
.effects .deep { padding-left: 35px; height: 21px; }
.layer-actions { height: 25px; flex: none; display: flex; align-items: center; justify-content: flex-end; gap: 4px; padding: 0 22px 1px 0; border-top: 1px solid #383838; }
.layer-actions button { width: 23px; height: 20px; position: relative; }
.layer-actions .fx { margin: 0; }
.pick::after { content: ""; position: absolute; right: 2px; bottom: 1px; border: 2px solid transparent; border-top-color: #dedede; border-bottom: 0; }
</style>
